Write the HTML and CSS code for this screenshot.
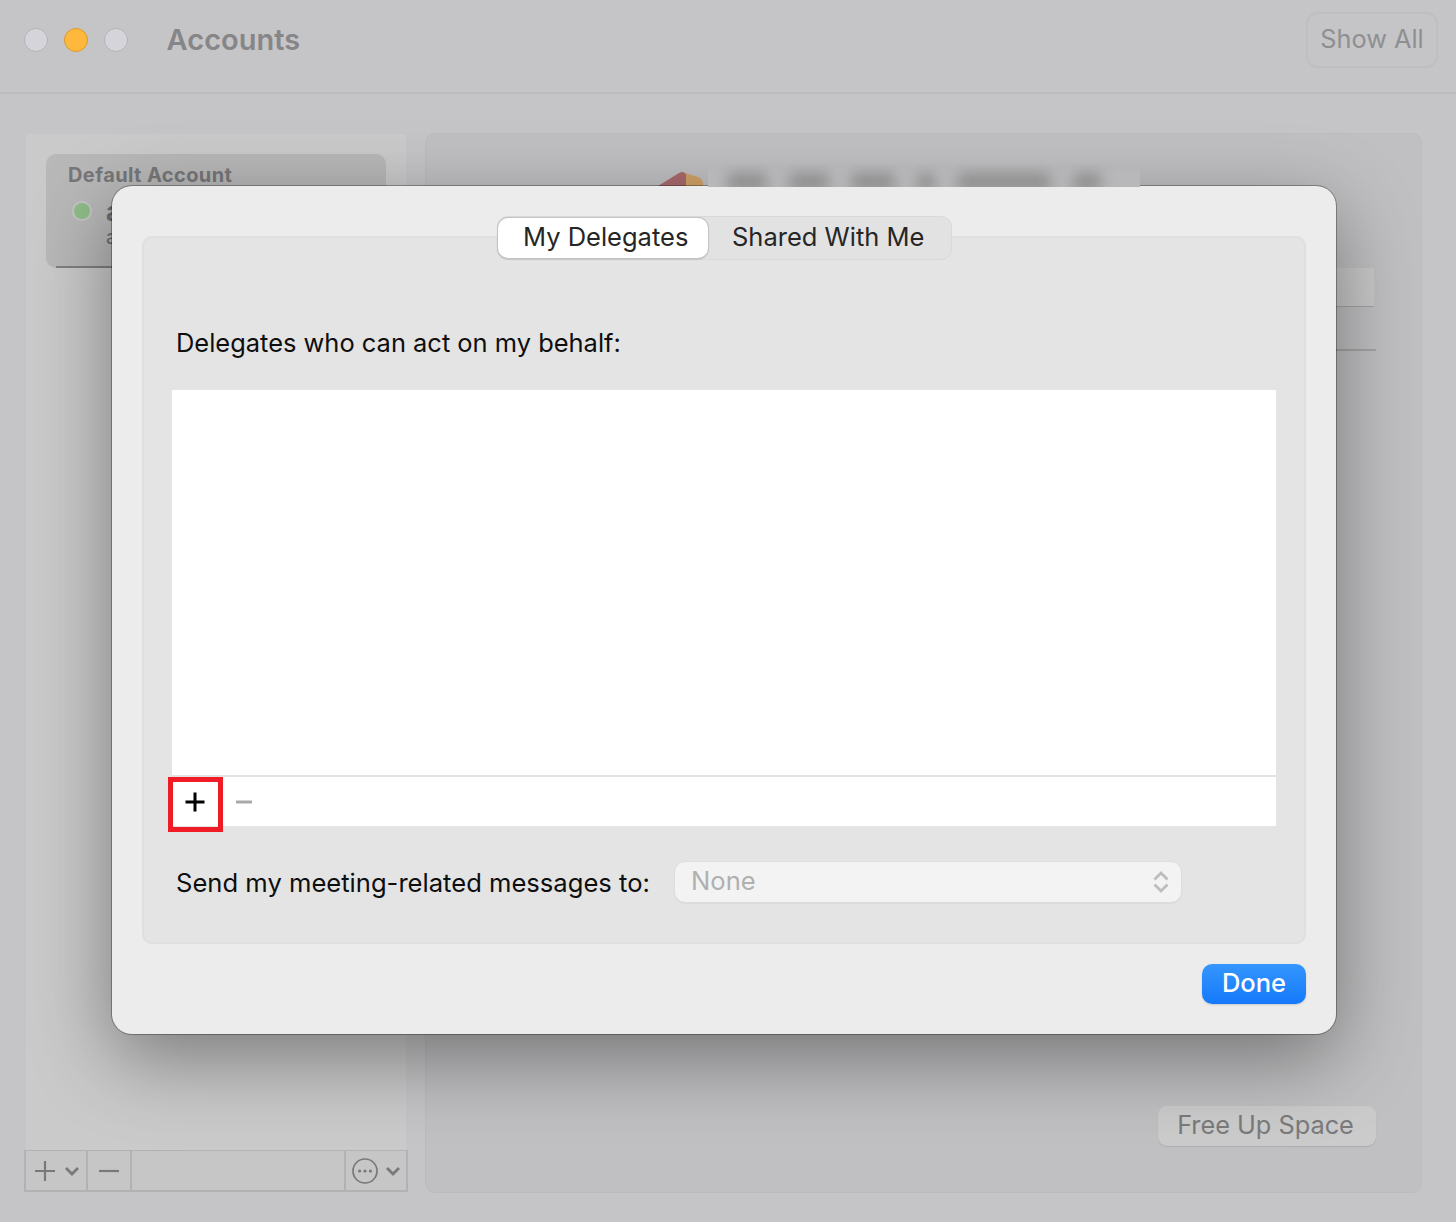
FILE: index.html
```html
<!DOCTYPE html>
<html lang="en">
<head>
<meta charset="utf-8">
<title>Accounts</title>
<link rel="stylesheet" href="styles.css">
</head>
<body>
<div class="window">
  <header class="titlebar">
    <div class="lights">
      <span class="light"></span>
      <span class="light light-min"></span>
      <span class="light"></span>
    </div>
    <h1 class="title">Accounts</h1>
    <button class="show-all">Show All</button>
  </header>
  <main class="content">
    <aside class="sidebar">
      <div class="account-list">
        <div class="account-card">
          <div class="account-heading">Default Account</div>
          <div class="account-row"><span class="status-dot"></span><span class="account-name">a</span></div>
          <div class="account-sub">a</div>
          <div class="account-rule"></div>
        </div>
      </div>
      <div class="sidebar-tools">
        <div class="tool tool-add">
          <svg class="ico" width="22" height="22" viewBox="0 0 22 22"><path d="M11 1v20M1 11h20" stroke="#79797b" stroke-width="2.2" fill="none"/></svg>
          <svg class="ico" width="16" height="10" viewBox="0 0 16 10"><path d="M2 2l6 6 6-6" stroke="#79797b" stroke-width="2.8" fill="none"/></svg>
        </div>
        <div class="tool tool-remove">
          <svg class="ico" width="22" height="4" viewBox="0 0 22 4"><path d="M1 2h20" stroke="#79797b" stroke-width="2.2" fill="none"/></svg>
        </div>
        <div class="tool tool-spacer"></div>
        <div class="tool tool-more">
          <svg class="ico" width="26" height="26" viewBox="0 0 26 26"><circle cx="13" cy="13" r="12" stroke="#79797b" stroke-width="1.7" fill="none"/><circle cx="7.6" cy="13" r="1.6" fill="#79797b"/><circle cx="13" cy="13" r="1.6" fill="#79797b"/><circle cx="18.4" cy="13" r="1.6" fill="#79797b"/></svg>
          <svg class="ico" width="16" height="10" viewBox="0 0 16 10"><path d="M2 2l6 6 6-6" stroke="#79797b" stroke-width="2.8" fill="none"/></svg>
        </div>
      </div>
    </aside>
    <section class="detail">
      <div class="detail-head">
        <svg class="logo" width="50" height="16" viewBox="0 0 50 16"><path d="M24 0L40 5Q45 7 45 12V16H24Z" fill="#d1a268"/><path d="M0 14L21 1Q24 -1 27 1L28 3V16H0Z" fill="#ab6a6e"/></svg>
        <div class="blur-box">
          <span class="lump lump-a"></span>
          <span class="lump lump-b"></span>
          <span class="lump lump-c"></span>
          <span class="lump lump-d"></span>
          <span class="lump lump-e"></span>
          <span class="lump lump-f"></span>
        </div>
      </div>
      <div class="detail-field"></div>
      <div class="detail-rule"></div>
      <div class="detail-foot"><button class="free-space">Free Up Space</button></div>
    </section>
  </main>
</div>
<div class="sheet">
  <div class="group">
    <div class="tabs">
      <div class="tab tab-active">My Delegates</div>
      <div class="tab tab-other">Shared With Me</div>
    </div>
    <p class="label">Delegates who can act on my behalf:</p>
    <div class="list">
      <div class="list-body"></div>
      <div class="list-bar">
        <div class="add-box">
          <svg width="20" height="20" viewBox="0 0 20 20"><path d="M10 0.5v19M0.5 10h19" stroke="#000" stroke-width="3" fill="none"/></svg>
        </div>
        <svg class="minus" width="16" height="4" viewBox="0 0 16 4"><path d="M1 2h14" stroke="#a9a9a9" stroke-width="3" stroke-linecap="round" fill="none"/></svg>
      </div>
    </div>
    <div class="send-row">
      <span class="send-label">Send my meeting-related messages to:</span>
      <div class="select">
        <span class="select-value">None</span>
        <svg width="16" height="24" viewBox="0 0 16 24"><path d="M1.5 9.5L8 3l6.500 6.500M1.500 14.500L8 21l6.500-6.500" stroke="#bdbdbd" stroke-width="2.800" fill="none"/></svg>
      </div>
    </div>
  </div>
  <div class="sheet-foot"><button class="done">Done</button></div>
</div>
</body>
</html>
```
FILE: styles.css
```css
* { box-sizing: border-box; }
html, body { margin: 0; padding: 0; }
body {
  width: 1456px;
  height: 1222px;
  overflow: hidden;
  position: relative;
  background: #c5c5c7;
  font-family: Inter, "Liberation Sans", sans-serif;
}
button { font-family: inherit; }
.window { width: 1456px; height: 1222px; display: flex; flex-direction: column; }

.titlebar {
  height: 94px;
  flex: none;
  border-bottom: 2px solid #bcbcbe;
  display: flex;
  align-items: center;
  padding: 0 18px 14px 24px;
}
.lights { display: flex; gap: 16px; margin-top: 2px; }
.light {
  width: 24px; height: 24px; border-radius: 50%;
  background: #d5d4da; border: 1px solid #b4b4b8;
}
.light-min { background: #feb93c; border-color: #dc9a2c; }
.title {
  margin: 0 0 0 38.6px;
  font-size: 29px;
  font-weight: 600;
  color: #868688;
  flex: 1;
}
.show-all {
  width: 132px; height: 56px;
  margin-top: 2px;
  background: #c5c5c7;
  border: 2px solid #bfbfc1;
  border-radius: 12px;
  color: #8f8f91;
  font-size: 25.3px;
  padding: 0 0 3px;
}

.content {
  flex: 1;
  display: flex;
  padding: 39px 34px 29px 24px;
  gap: 17px;
}
.sidebar { width: 384px; display: flex; flex-direction: column; padding: 1px 0; }
.account-list {
  flex: 1;
  margin: 0 2px;
  background: #cacaca;
  padding: 20px;
}
.account-card {
  height: 114px;
  background: #b8b8b9;
  border-radius: 10px;
  padding: 9px 22px;
  position: relative;
}
.account-heading { font-size: 20px; font-weight: 700; color: #777778; line-height: 24px; letter-spacing: 0.4px; }
.account-row { display: flex; align-items: center; gap: 16px; margin-top: 10px; margin-left: 6px; height: 28px; }
.status-dot {
  width: 16px; height: 16px; border-radius: 50%;
  background: #8fbd89; box-shadow: 0 0 0 2px #c6c6c6;
}
.account-name { font-size: 26px; font-weight: 700; color: #6c6c6d; }
.account-sub { font-size: 20px; color: #6c6c6d; margin-left: 38px; }
.account-rule { position: absolute; left: 10px; right: 0; bottom: 0; height: 2px; background: #808081; }

.sidebar-tools {
  height: 42px;
  flex: none;
  display: flex;
  border: 2px solid #b2b2b3;
  border-top-width: 1px;
  background: #c6c6c7;
}
.tool { display: flex; align-items: center; }
.tool-add { width: 62px; padding-left: 8px; gap: 8px; border-right: 2px solid #b2b2b3; }
.tool-remove { width: 44px; justify-content: center; border-right: 2px solid #b2b2b3; }
.tool-spacer { flex: 1; border-right: 2px solid #b2b2b3; }
.tool-more { width: 60px; padding-left: 6px; gap: 7px; }

.detail {
  flex: 1;
  border-radius: 10px;
  background: #c0c0c2;
  border: 1px solid #bcbcbe;
  display: flex;
  flex-direction: column;
  position: relative;
  padding-top: 30px;
}
.detail-head { height: 30px; display: flex; margin-left: 232px; }
.logo { flex: none; margin-top: 8px; }
.blur-box {
  position: relative;
  z-index: 2;
  width: 432px;
  height: 23px;
  background: linear-gradient(rgba(184,184,186,0), #b8b8ba 40%);
  overflow: hidden;
  display: flex;
  gap: 20px;
  padding: 9px 0 0 18px;
}
.lump {
  height: 18px;
  background: #8e8e8f;
  border-radius: 8px;
  filter: blur(7px);
  flex: none;
}
.lump-a { width: 42px; }
.lump-b { width: 42px; }
.lump-c { width: 46px; }
.lump-d { width: 20px; }
.lump-e { width: 96px; }
.lump-f { width: 30px; }
.detail-field {
  height: 39px; width: 300px;
  margin: 74px 47px 0 auto;
  background: #c9c9c9;
  border-bottom: 1px solid #a4a4a4;
}
.detail-rule { height: 2px; width: 300px; margin: 42px 45px 0 auto; background: #a4a4a5; }
.detail-foot { flex: 1; display: flex; align-items: flex-end; justify-content: flex-end; padding: 0 45px 46px 0; }
.free-space {
  width: 218px; height: 40px;
  background: #cbcbcc;
  border: none;
  border-radius: 9px;
  box-shadow: 0 1px 1px rgba(0,0,0,0.1);
  font-size: 25.3px;
  color: #7a7a7b;
  padding: 0 3px 4px 0;
}

.sheet {
  position: absolute;
  left: 112px; top: 186px;
  width: 1224px; height: 848px;
  background: #ececec;
  border-radius: 20px;
  padding: 50px 30px 30px;
  box-shadow: 0 0 0 1px rgba(0,0,0,0.3), 0 24px 80px rgba(0,0,0,0.4);
  display: flex;
  flex-direction: column;
}
.group {
  height: 708px;
  flex: none;
  background: #e4e4e4;
  border: 2px solid #dfdfdf;
  border-radius: 10px;
  position: relative;
  padding: 0 28px;
  display: flex;
  flex-direction: column;
}
.tabs {
  position: absolute;
  left: 353px; top: -22px;
  width: 455px; height: 44px;
  display: flex;
  background: #e2e2e2;
  border: 1px solid #d9d9d9;
  border-radius: 11px;
}
.tab {
  font-size: 25.5px;
  color: #262626;
  line-height: 40px;
}
.tab-other { flex: 1; padding-left: 24px; }
.tab-active {
  flex: none;
  width: 210px;
  height: 40px;
  margin-top: 1px;
  line-height: 38px;
  padding-left: 25px;
  background: #fff;
  border-radius: 10px;
  box-shadow: 0 0 0 1px #c4c4c4, 0 1px 2px rgba(0,0,0,0.3);
}
.label {
  margin: 89px 0 0 4px;
  font-size: 25.45px;
  line-height: 32px;
  color: #0e0e0e;
}
.list { margin-top: 31px; width: 1104px; height: 436px; background: #fff; display: flex; flex-direction: column; }
.list-body { height: 387px; flex: none; border-bottom: 2px solid #e2e2e2; }
.list-bar { flex: 1; display: flex; align-items: center; position: relative; padding-left: 64px; }
.add-box {
  position: absolute;
  left: -4px; top: 0;
  width: 55px; height: 55px;
  border: 5px solid #ef1c25;
  padding: 0 1px 6px 0;
  display: flex;
  align-items: center;
  justify-content: center;
}
.send-row { display: flex; align-items: center; margin: 36px 0 0 4px; }
.send-label { font-size: 25.6px; color: #0e0e0e; width: 499px; flex: none; }
.select {
  width: 506px; height: 40px;
  background: #f3f3f3;
  border-radius: 10px;
  box-shadow: 0 0 0 1px #dedede, 0 1px 2px rgba(0,0,0,0.15);
  display: flex;
  align-items: center;
  justify-content: space-between;
  padding: 0 12px 0 16px;
  font-size: 25.6px;
  color: #b0b0b0;
}
.select-value { padding-bottom: 4px; }
.sheet-foot { display: flex; justify-content: flex-end; margin-top: 20px; }
.done {
  width: 104px; height: 40px;
  background: linear-gradient(#3596fd, #1479fb);
  color: #fff;
  border: none;
  border-radius: 10px;
  font-size: 25.5px;
  font-weight: 500;
  padding: 0 0 3px;
  box-shadow: 0 1px 2px rgba(0,0,0,0.15);
}
```
